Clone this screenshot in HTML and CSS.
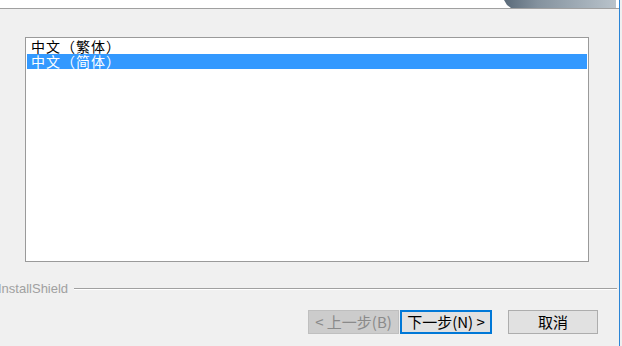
FILE: index.html
```html
<!DOCTYPE html>
<html lang="zh">
<head>
<meta charset="utf-8">
<title>InstallShield</title>
<link rel="stylesheet" href="styles.css">
</head>
<body>
<div class="window">
  <div class="header">
    <svg class="banner" width="112" height="8" viewBox="0 0 112 8">
      <defs>
        <linearGradient id="g" x1="0" y1="0" x2="1" y2="0">
          <stop offset="0" stop-color="#5a6a79"/>
          <stop offset="0.3" stop-color="#84929e"/>
          <stop offset="1" stop-color="#b9c3cb"/>
        </linearGradient>
      </defs>
      <polygon points="0,0 112,0 112,8 7,8 3,5" fill="url(#g)"/>
    </svg>
  </div>
  <div class="content">
    <div class="listbox">
      <div class="item">中文（繁体）</div>
      <div class="item selected">中文（简体）</div>
    </div>
    <div class="brand">
      <span class="brand-text">InstallShield</span>
      <span class="brand-line"></span>
    </div>
    <div class="buttons">
      <button class="btn disabled">&lt; 上一步(B)</button>
      <button class="btn focused">下一步(N) &gt;</button>
      <button class="btn cancel">取消</button>
    </div>
  </div>
</div>
</body>
</html>
```

FILE: styles.css
```css
html, body {
  margin: 0;
  padding: 0;
  background: #f0f0f0;
  width: 622px;
  height: 346px;
  overflow: hidden;
  font-family: "Noto Sans CJK SC", "Liberation Sans", sans-serif;
}

.window {
  display: flex;
  flex-direction: column;
  width: 620px;
  height: 346px;
  box-sizing: border-box;
  border-right: 1px solid #2b85d6;
}

.header {
  height: 8px;
  background: #ffffff;
  border-bottom: 1px solid #a0a0a0;
  display: flex;
  justify-content: flex-end;
  padding-right: 3px;
}

.banner {
  display: block;
}

.content {
  display: flex;
  flex-direction: column;
}

.listbox {
  margin-top: 28px;
  margin-left: 25px;
  width: 564px;
  height: 225px;
  box-sizing: border-box;
  background: #ffffff;
  border: 1px solid #9a9a9a;
  padding: 1px;
}

.item {
  height: 15px;
  line-height: 15px;
  font-size: 14px;
  letter-spacing: 1px;
  padding-left: 4px;
  color: #000000;
  white-space: nowrap;
}

.item.selected {
  background: #3399ff;
  color: #ffffff;
}

.brand {
  display: flex;
  align-items: center;
  margin-top: 20px;
  height: 14px;
  overflow: hidden;
}

.brand-text {
  font-family: "Liberation Sans", Arial, sans-serif;
  font-size: 13px;
  line-height: 14px;
  color: #a0a0a0;
  margin-left: -2px;
}

.brand-line {
  flex: 1;
  margin-left: 6px;
  margin-right: 2px;
  border-top: 1px solid #a0a0a0;
  border-bottom: 1px solid #ffffff;
}

.buttons {
  display: flex;
  margin-top: 14px;
  padding-left: 308px;
}

.btn {
  height: 24px;
  box-sizing: border-box;
  font-family: "Noto Sans CJK SC", sans-serif;
  font-size: 15px;
  line-height: 20px;
  padding: 0;
  margin: 0;
  background: #e1e1e1;
  border: 1px solid #adadad;
  color: #000000;
  white-space: nowrap;
}

.btn.disabled {
  width: 91px;
  background: #cccccc;
  border-color: #bfbfbf;
  color: #8a8a8a;
}

.btn.focused {
  width: 92px;
  margin-left: 1px;
  border: 2px solid #0078d7;
}

.btn.cancel {
  width: 90px;
  margin-left: 16px;
}
```
